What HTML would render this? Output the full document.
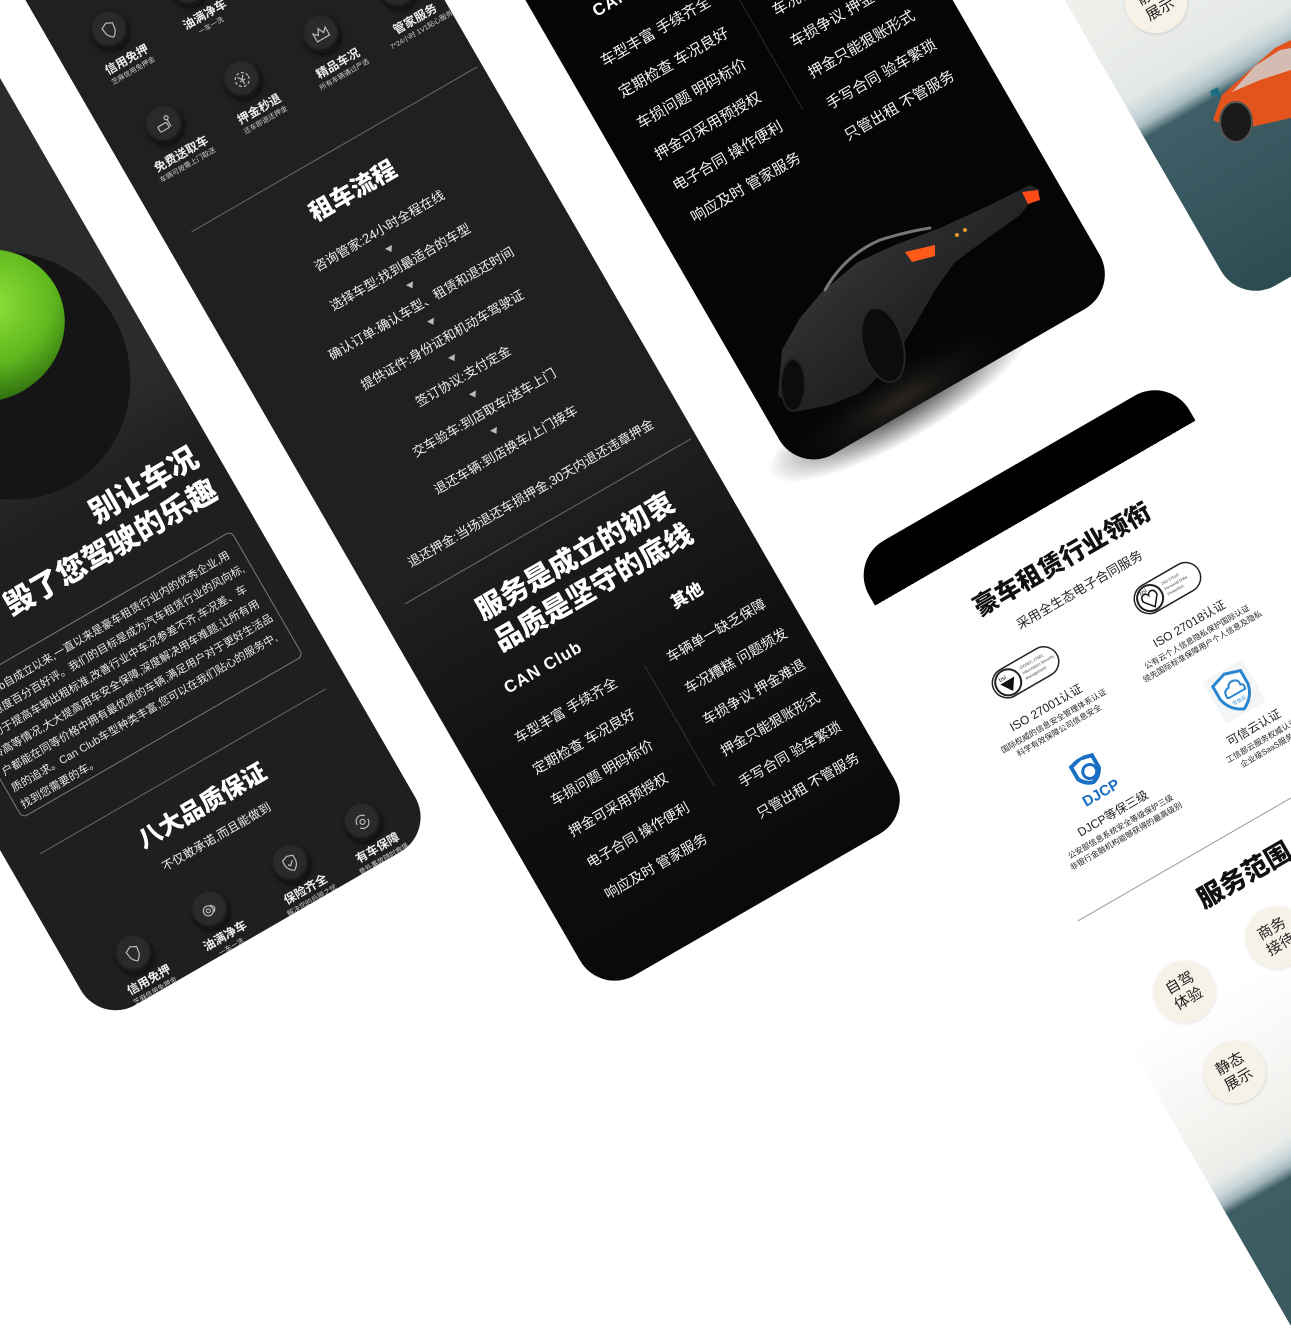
<!DOCTYPE html>
<html><head><meta charset="utf-8">
<style>
html,body{margin:0;padding:0;width:1291px;height:1341px;overflow:hidden;}
body{background:#fff;position:relative;font-family:"Liberation Sans","Noto Sans CJK SC",sans-serif;}
.rot{position:absolute;left:0;top:0;width:1px;height:1px;transform:rotate(-30deg);transform-origin:0 0;}
.a{position:absolute;}
.p{position:absolute;border-radius:40px;overflow:hidden;}
.t{position:absolute;white-space:nowrap;color:#eee;font-family:"Liberation Sans","Noto Sans CJK SC",sans-serif;}
.c{text-align:center;}
.h{font-weight:900;color:#fff;}
.ic{position:absolute;width:38px;height:38px;border-radius:50%;background:radial-gradient(circle at 50% 45%,#2a2a2a 0,#2a2a2a 55%,#111 70%,#3c3c3c 78%,#161616 100%);box-shadow:0 3px 5px rgba(0,0,0,.6);}
.ic svg{position:absolute;left:9px;top:9px;}
.lb{position:absolute;width:110px;text-align:center;color:#eee;line-height:12px;white-space:nowrap;}
.lb b{font-size:12px;font-weight:700;display:block;line-height:15px;}
.lb i{font-style:normal;font-size:7px;display:block;color:#ccc;}
.ln{position:absolute;height:1px;background:#6b6b6b;}
.st{font-size:13px;line-height:16px;}
.ar{position:absolute;width:0;height:0;border-left:4px solid transparent;border-right:4px solid transparent;border-top:6px solid #bbb;}
.li{font-size:14px;color:#f2f2f2;line-height:18px;}
.circ{position:absolute;width:62px;height:62px;border-radius:50%;background:#f7f2e8;box-shadow:0 1px 3px rgba(0,0,0,.12);text-align:center;font-size:15px;line-height:18px;color:#222;display:flex;align-items:center;justify-content:center;}
.bk{color:#111;}
</style></head><body>
<div class="rot">

<!-- Panel A (left) -->
<div class="p" style="left:-425px;top:-400px;width:386px;height:1338px;background:linear-gradient(to bottom,#2b2c2e 0,#2a2b2d 800px,#1e1f21 880px,#1e1f21 100%);">
<div class="a" style="left:425px;top:400px;">
<div class="a" style="left:-300px;top:205px;width:240px;height:250px;border-radius:50%;background:#151515;"></div>
<div class="a" style="left:-255px;top:200px;width:160px;height:150px;border-radius:50%;background:radial-gradient(ellipse at 60% 40%,#8fe03a 0,#5fb81e 45%,#2f6e10 75%,#151515 100%);"></div>
<div class="t h" style="left:-458px;top:474px;width:400px;text-align:right;font-size:30px;line-height:38px;">别让车况<br>毁了您驾驶的乐趣</div>
<div class="a" style="left:-390px;top:575px;width:323px;height:143px;border:1px solid #7a7a7a;border-radius:6px;"></div>
<div class="t" style="left:-384px;top:586px;width:312px;white-space:normal;font-size:11px;line-height:19px;color:#e8e8e8;">Can Club自成立以来,一直以来是豪车租赁行业内的优秀企业,用户满意度百分百好评。我们的目标是成为汽车租赁行业的风向标,致力于提高车辆出租标准,改善行业中车况参差不齐,车况差、车龄高等情况,大大提高用车安全保障,深度解决用车难题,让所有用户都能在同等价格中拥有最优质的车辆,满足用户对于更好生活品质的追求。Can Club车型种类丰富,您可以在我们贴心的服务中,找到您需要的车。</div>
<div class="ln" style="left:-392px;top:759px;width:330px;"></div>
<div class="t h c" style="left:-338px;top:785px;width:220px;font-size:24px;line-height:30px;">八大品质保证</div>
<div class="t c" style="left:-331px;top:824px;width:200px;font-size:12px;">不仅敢承诺,而且能做到</div>
<div class="ic" style="left:-380px;top:874px;"><svg width="20" height="20" viewBox="0 0 20 20" fill="none" stroke="#bbb" stroke-width="1.2"><path d="M4 5 L10 2 L16 5 L15 12 Q13 16 10 18 Q7 16 5 12 Z"/></svg></div>
<div class="ic" style="left:-292px;top:874px;"><svg width="20" height="20" viewBox="0 0 20 20" fill="none" stroke="#bbb" stroke-width="1.2"><circle cx="8" cy="10" r="5"/><circle cx="8" cy="10" r="2"/><path d="M12 6 Q18 10 12 14"/></svg></div>
<div class="ic" style="left:-199px;top:874px;"><svg width="20" height="20" viewBox="0 0 20 20" fill="none" stroke="#bbb" stroke-width="1.2"><path d="M10 2 L16 4 L16 10 Q15 15 10 18 Q5 15 4 10 L4 4 Z"/><path d="M7 10 L9 12 L13 8"/></svg></div>
<div class="ic" style="left:-116px;top:874px;"><svg width="20" height="20" viewBox="0 0 20 20" fill="none" stroke="#bbb" stroke-width="1.2"><path d="M4 10 A6 6 0 0 1 15 6"/><path d="M16 10 A6 6 0 0 1 5 14"/><circle cx="10" cy="10" r="2.5"/></svg></div>
<div class="lb" style="left:-416px;top:916px;"><b>信用免押</b><i>芝麻信用免押金</i></div>
<div class="lb" style="left:-328px;top:916px;"><b>油满净车</b><i>一车一洗</i></div>
<div class="lb" style="left:-235px;top:916px;"><b>保险齐全</b><i>解决您的后顾之忧</i></div>
<div class="lb" style="left:-152px;top:916px;"><b>有车保障</b><i>意外事故随时救援</i></div>
</div></div>

<!-- Panel B (middle) -->
<div class="p" style="left:22px;top:-400px;width:363px;height:1562px;background:linear-gradient(to bottom,#1f2022 0,#1f2022 1110px,#111 1300px,#0a0a0a 100%);">
<div class="a" style="left:-22px;top:400px;">
<div class="ic" style="left:61px;top:-28px;"></div>
<div class="ic" style="left:151px;top:-28px;"></div>
<div class="ic" style="left:242px;top:-28px;"></div>
<div class="ic" style="left:331px;top:-28px;"></div>
<div class="ic" style="left:61px;top:62px;"><svg width="20" height="20" viewBox="0 0 20 20" fill="none" stroke="#bbb" stroke-width="1.2"><path d="M4 5 L10 2 L16 5 L15 12 Q13 16 10 18 Q7 16 5 12 Z"/></svg></div>
<div class="ic" style="left:151px;top:64px;"><svg width="20" height="20" viewBox="0 0 20 20" fill="none" stroke="#bbb" stroke-width="1.2"><circle cx="8" cy="10" r="5"/><circle cx="8" cy="10" r="2"/><path d="M12 6 Q18 10 12 14"/></svg></div>
<div class="ic" style="left:242px;top:64px;"><svg width="20" height="20" viewBox="0 0 20 20" fill="none" stroke="#bbb" stroke-width="1.2"><path d="M10 2 L16 4 L16 10 Q15 15 10 18 Q5 15 4 10 L4 4 Z"/><path d="M7 10 L9 12 L13 8"/></svg></div>
<div class="ic" style="left:331px;top:64px;"><svg width="20" height="20" viewBox="0 0 20 20" fill="none" stroke="#bbb" stroke-width="1.2"><path d="M4 10 A6 6 0 0 1 15 6"/><path d="M16 10 A6 6 0 0 1 5 14"/></svg></div>
<div class="lb" style="left:25px;top:108px;"><b>信用免押</b><i>芝麻信用免押金</i></div>
<div class="lb" style="left:115px;top:108px;"><b>油满净车</b><i>一车一洗</i></div>
<div class="lb" style="left:206px;top:108px;"><b>保险齐全</b><i>解决您的后顾之忧</i></div>
<div class="lb" style="left:295px;top:108px;"><b>有车保障</b><i>意外事故随时救援</i></div>
<div class="ic" style="left:61px;top:171px;"><svg width="20" height="20" viewBox="0 0 20 20" fill="none" stroke="#bbb" stroke-width="1.2"><rect x="3" y="9" width="10" height="6" rx="1"/><circle cx="15" cy="5" r="2"/><path d="M15 7 L15 15"/></svg></div>
<div class="ic" style="left:151px;top:171px;"><svg width="20" height="20" viewBox="0 0 20 20" fill="none" stroke="#bbb" stroke-width="1.2"><circle cx="10" cy="10" r="7" stroke-dasharray="3 2"/><path d="M7 6 L10 10 L13 6 M10 10 L10 15 M7 11 L13 11"/></svg></div>
<div class="ic" style="left:242px;top:171px;"><svg width="20" height="20" viewBox="0 0 20 20" fill="none" stroke="#bbb" stroke-width="1.2"><path d="M3 15 L3 6 L7 10 L10 4 L13 10 L17 6 L17 15 Z"/></svg></div>
<div class="ic" style="left:331px;top:171px;"><svg width="20" height="20" viewBox="0 0 20 20" fill="none" stroke="#bbb" stroke-width="1.2"><path d="M4 10 Q10 2 16 10 Q10 18 4 10Z"/></svg></div>
<div class="lb" style="left:25px;top:217px;"><b>免费送取车</b><i>车辆可按需上门取送</i></div>
<div class="lb" style="left:115px;top:217px;"><b>押金秒退</b><i>还车即退还押金</i></div>
<div class="lb" style="left:206px;top:217px;"><b>精品车况</b><i>所有车辆通过严选</i></div>
<div class="lb" style="left:295px;top:217px;"><b>管家服务</b><i>7*24小时 1V1贴心服务</i></div>
<div class="ln" style="left:50px;top:296px;width:330px;"></div>
<div class="t h c" style="left:110px;top:328px;width:200px;font-size:24px;line-height:30px;">租车流程</div>
<div class="t st c" style="left:58px;top:382px;width:310px;">咨询管家:24小时全程在线</div>
<div class="ar" style="left:209px;top:408px;"></div>
<div class="t st c" style="left:58px;top:424px;width:310px;">选择车型:找到最适合的车型</div>
<div class="ar" style="left:209px;top:450px;"></div>
<div class="t st c" style="left:58px;top:466px;width:310px;">确认订单:确认车型、租赁和退还时间</div>
<div class="ar" style="left:209px;top:492px;"></div>
<div class="t st c" style="left:58px;top:508px;width:310px;">提供证件:身份证和机动车驾驶证</div>
<div class="ar" style="left:209px;top:534px;"></div>
<div class="t st c" style="left:58px;top:550px;width:310px;">签订协议:支付定金</div>
<div class="ar" style="left:209px;top:576px;"></div>
<div class="t st c" style="left:58px;top:592px;width:310px;">交车验车:到店取车/送车上门</div>
<div class="ar" style="left:209px;top:618px;"></div>
<div class="t st c" style="left:58px;top:635px;width:310px;">退还车辆:到店换车/上门接车</div>
<div class="t st c" style="left:43px;top:685px;width:340px;">退还押金:当场退还车损押金,30天内退还违章押金</div>
<div class="ln" style="left:49px;top:725px;width:330px;"></div>
<div class="t h" style="left:108px;top:752px;font-size:28px;line-height:36px;">服务是成立的初衷<br>品质是坚守的底线</div>
<div class="t h" style="left:93px;top:840px;font-size:17px;letter-spacing:1px;">CAN Club</div>
<div class="t h" style="left:280px;top:845px;font-size:17px;">其他</div>
<div class="ln" style="left:225px;top:898px;width:1px;height:140px;background:#333;"></div>
<div class="t li" style="left:77px;top:880px;line-height:36px;">车型丰富 手续齐全<br>定期检查 车况良好<br>车损问题 明码标价<br>押金可采用预授权<br>电子合同 操作便利<br>响应及时 管家服务</div>
<div class="t li" style="left:249px;top:886px;line-height:36px;">车辆单一缺乏保障<br>车况糟糕 问题频发<br>车损争议 押金难退<br>押金只能狠账形式<br>手写合同 验车繁琐<br>只管出租 不管服务</div>
</div></div>

<!-- Panel C (right top, black) -->
<div class="p" style="left:455px;top:-300px;width:370px;height:1110px;background:#050505;">
<div class="a" style="left:-455px;top:300px;">
<div class="t h" style="left:508px;top:298px;font-size:17px;letter-spacing:1px;">CAN Club</div>
<div class="t h" style="left:695px;top:303px;font-size:17px;">其他</div>
<div class="ln" style="left:640px;top:356px;width:1px;height:140px;background:#2a2a2a;"></div>
<div class="t li" style="left:490px;top:338px;line-height:36px;font-size:15px;">车型丰富 手续齐全<br>定期检查 车况良好<br>车损问题 明码标价<br>押金可采用预授权<br>电子合同 操作便利<br>响应及时 管家服务</div>
<div class="t li" style="left:664px;top:344px;line-height:36px;font-size:15px;">车辆单一缺乏保障<br>车况糟糕 问题频发<br>车损争议 押金难退<br>押金只能狠账形式<br>手写合同 验车繁琐<br>只管出租 不管服务</div>
</div></div>

<!-- Panel D (white column) -->
<div class="p" style="left:455px;top:910px;width:370px;height:1000px;background:linear-gradient(to bottom,#000 0,#000 52px,#fff 52px,#fff 560px,#f2f3ef 680px,#e9ece8 720px,#c9d6da 735px,#9fb3b8 745px,#3e5e66 755px,#34535b 100%);">
<div class="a" style="left:-455px;top:-910px;">
<div class="t c bk" style="left:520px;top:1000px;width:240px;font-size:25px;font-weight:900;line-height:32px;color:#111;">豪车租赁行业领衔</div>
<div class="t c bk" style="left:540px;top:1040px;width:200px;font-size:13px;color:#222;">采用全生态电子合同服务</div>
<svg class="a" style="left:515px;top:1078px;" width="76" height="34" viewBox="0 0 76 34"><rect x="1" y="2" width="72" height="30" rx="15" fill="#fff" stroke="#222" stroke-width="1.5"/><circle cx="17" cy="17" r="13" fill="#fff" stroke="#222" stroke-width="2"/><path d="M9 15 L25 15 L17 27 Z" fill="#111"/><text x="10" y="13" font-size="6" fill="#111" font-family="Liberation Sans">bsi</text><text x="34" y="12" font-size="4" fill="#444" font-family="Liberation Sans">ISO/IEC 27001</text><text x="34" y="18" font-size="4" fill="#444" font-family="Liberation Sans">Information Security</text><text x="34" y="24" font-size="4" fill="#444" font-family="Liberation Sans">Management</text></svg>
<div class="t c bk" style="left:492px;top:1127px;width:120px;font-size:12px;color:#222;">ISO 27001认证</div>
<div class="t c bk" style="left:482px;top:1146px;width:140px;font-size:8px;line-height:11px;color:#222;">国际权威的信息安全管理体系认证<br>科学有效保障公司信息安全</div>
<svg class="a" style="left:680px;top:1076px;" width="76" height="34" viewBox="0 0 76 34"><rect x="1" y="2" width="72" height="30" rx="15" fill="#fff" stroke="#222" stroke-width="1.5"/><circle cx="17" cy="17" r="13" fill="#fff" stroke="#222" stroke-width="2"/><path d="M17 27 L9 17 Q9 11 13 11 Q16 11 17 14 Q18 11 21 11 Q25 11 25 17 Z" fill="none" stroke="#111" stroke-width="1.5"/><text x="10" y="10" font-size="6" fill="#111" font-family="Liberation Sans">bsi</text><text x="34" y="12" font-size="4" fill="#444" font-family="Liberation Sans">ISO 27018</text><text x="34" y="18" font-size="4" fill="#444" font-family="Liberation Sans">Personal Data</text><text x="34" y="24" font-size="4" fill="#444" font-family="Liberation Sans">Protection</text></svg>
<div class="t c bk" style="left:658px;top:1126px;width:120px;font-size:12px;color:#222;">ISO 27018认证</div>
<div class="t c bk" style="left:643px;top:1145px;width:150px;font-size:8px;line-height:11px;color:#222;">公有云个人信息隐私保护国际认证<br>领先国际标准保障用户个人信息及隐私</div>
<svg class="a" style="left:534px;top:1196px;" width="46" height="50" viewBox="0 0 46 50"><path d="M10 4 L22 1 L34 4 L34 18 Q30 26 22 28 Q14 26 10 18 Z" fill="none" stroke="#1a6fc4" stroke-width="4"/><circle cx="24" cy="17" r="7" fill="none" stroke="#1a6fc4" stroke-width="3"/><text x="23" y="46" text-anchor="middle" font-size="15" font-weight="900" fill="#1a6fc4" font-family="Liberation Sans">DJCP</text></svg>
<div class="t c bk" style="left:497px;top:1252px;width:120px;font-size:12px;color:#222;">DJCP等保三级</div>
<div class="t c bk" style="left:482px;top:1271px;width:150px;font-size:8px;line-height:11px;color:#222;">公安部信息系统安全等级保护三级<br>非银行金融机构能够获得的最高级别</div>
<svg class="a" style="left:700px;top:1192px;" width="46" height="48" viewBox="0 0 46 48"><rect x="0" y="0" width="46" height="48" fill="#f3f5f7"/><path d="M23 4 L39 9 L39 24 Q36 38 23 44 Q10 38 7 24 L7 9 Z" fill="#fff" stroke="#2a86d0" stroke-width="3"/><path d="M14 24 Q14 18 20 18 Q22 13 27 14 Q33 15 32 21 Q36 22 34 27 L16 27 Q13 27 14 24 Z" fill="none" stroke="#2a86d0" stroke-width="2"/><text x="23" y="36" text-anchor="middle" font-size="5" fill="#2a86d0" font-family="Noto Sans CJK SC">可信云</text></svg>
<div class="t c bk" style="left:662px;top:1248px;width:120px;font-size:12px;color:#222;">可信云认证</div>
<div class="t c bk" style="left:647px;top:1267px;width:150px;font-size:8px;line-height:11px;color:#222;">工信部云服务权威认证<br>企业级SaaS服务</div>
<div class="ln" style="left:473px;top:1336px;width:350px;background:#999;"></div>
<div class="t c bk" style="left:540px;top:1364px;width:200px;font-size:26px;font-weight:900;line-height:32px;color:#111;">服务范围</div>
<div class="circ" style="left:499px;top:1420px;">自驾<br>体验</div>
<div class="circ" style="left:606px;top:1419px;">商务<br>接待</div>
<div class="circ" style="left:713px;top:1420px;">婚庆<br>用车</div>
<div class="circ" style="left:502px;top:1515px;">静态<br>展示</div>
<div class="circ" style="left:609px;top:1515px;">影视<br>拍摄</div>
</div></div>

<!-- Panel E (far right) -->
<div class="p" style="left:922px;top:-300px;width:370px;height:1185px;background:linear-gradient(to bottom,#fff 0,#f8f8f6 600px,#eef0ec 850px,#e4e8e4 950px,#c5d3d8 970px,#a5b9be 980px,#3f5f68 992px,#35545c 1100px,#2c4a52 100%);">
<div class="a" style="left:-922px;top:300px;">
<div class="circ" style="left:969px;top:549px;">静态<br>展示</div>
<div class="circ" style="left:1076px;top:549px;">影视<br>拍摄</div>
</div></div>
</div>

<svg class="a" style="left:0;top:0;" width="1291" height="1341" viewBox="0 0 1291 1341">
  <defs>
    <linearGradient id="cb" x1="0" y1="0" x2="1" y2="1"><stop offset="0" stop-color="#6a6c6e"/><stop offset="0.35" stop-color="#2c2e30"/><stop offset="1" stop-color="#0a0a0a"/></linearGradient>
    <radialGradient id="gl" cx="0.5" cy="0.5" r="0.5"><stop offset="0" stop-color="#2a2622"/><stop offset="1" stop-color="#050505" stop-opacity="0"/></radialGradient>
  </defs>
  <ellipse cx="900" cy="400" rx="150" ry="40" fill="url(#gl)" transform="rotate(-30 900 400)"/>
  <path d="M778 395 L782 350 L800 318 L822 292 L858 262 L895 245 L940 228 L990 205 L1030 185 L1040 190 L1020 215 L985 240 L955 262 L935 290 L912 330 L890 365 L862 392 L830 405 L795 412 Z" fill="url(#cb)"/>
  <path d="M825 290 Q845 255 880 240 Q905 232 930 228" fill="none" stroke="#777" stroke-width="3" stroke-linecap="round"/>
  <ellipse cx="883" cy="345" rx="20" ry="38" fill="#0c0c0c" stroke="#262626" stroke-width="2" transform="rotate(-15 883 345)"/>
  <ellipse cx="793" cy="385" rx="12" ry="26" fill="#0c0c0c" stroke="#222" stroke-width="2"/>
  <path d="M905 252 L935 245 L935 256 L912 262 Z" fill="#ff5a1a"/>
  <path d="M1022 192 L1038 190 L1040 200 L1028 204 Z" fill="#ff4a1a"/>
  <circle cx="957" cy="235" r="2" fill="#e89a30"/><circle cx="965" cy="230" r="2" fill="#e89a30"/>
  <path d="M1213 120 L1222 95 L1250 70 L1275 48 L1291 40 L1291 118 L1260 125 L1235 130 Z" fill="#e3541c"/>
  <path d="M1232 92 L1255 66 L1280 50 L1291 48 L1291 70 L1260 80 Z" fill="#cfd6da" opacity="0.8"/>
  <ellipse cx="1236" cy="122" rx="16" ry="20" fill="#1a1a1a" stroke="#555" stroke-width="2"/>
  <path d="M1210 91 L1218 87 L1220 95 L1212 97 Z" fill="#1d6e82"/>
</svg>
</body></html>
